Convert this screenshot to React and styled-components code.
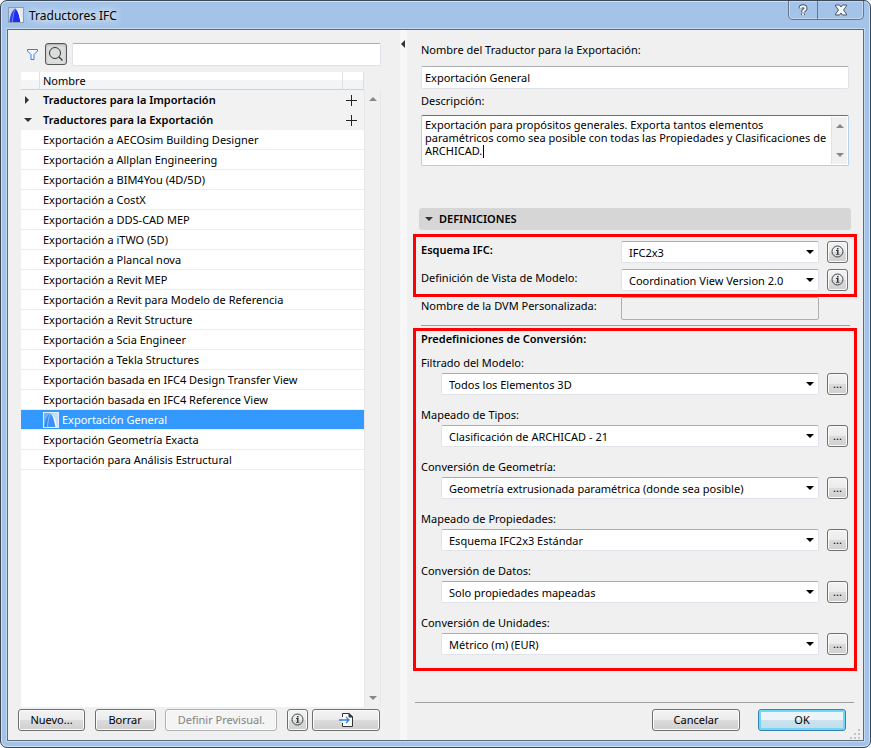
import React, {useState} from 'react';
import styled, {createGlobalStyle} from 'styled-components';

const exporters = [
  'Exportación a AECOsim Building Designer',
  'Exportación a Allplan Engineering',
  'Exportación a BIM4You (4D/5D)',
  'Exportación a CostX',
  'Exportación a DDS-CAD MEP',
  'Exportación a iTWO (5D)',
  'Exportación a Plancal nova',
  'Exportación a Revit MEP',
  'Exportación a Revit para Modelo de Referencia',
  'Exportación a Revit Structure',
  'Exportación a Scia Engineer',
  'Exportación a Tekla Structures',
  'Exportación basada en IFC4 Design Transfer View',
  'Exportación basada en IFC4 Reference View',
  'Exportación General',
  'Exportación Geometría Exacta',
  'Exportación para Análisis Estructural'
];

const conversions = [
  {id: 'filter', label: 'Filtrado del Modelo:', value: 'Todos los Elementos 3D'},
  {id: 'types', label: 'Mapeado de Tipos:', value: 'Clasificación de ARCHICAD - 21'},
  {id: 'geometry', label: 'Conversión de Geometría:', value: 'Geometría extrusionada paramétrica (donde sea posible)'},
  {id: 'properties', label: 'Mapeado de Propiedades:', value: 'Esquema IFC2x3 Estándar'},
  {id: 'data', label: 'Conversión de Datos:', value: 'Solo propiedades mapeadas'},
  {id: 'units', label: 'Conversión de Unidades:', value: 'Métrico (m) (EUR)'}
];

const Triangle = ({dir, color = '#333'}) => {
  const points = {
    down: '0,2 8,2 4,6',
    up: '0,6 8,6 4,2',
    right: '1,0 5,4 1,8',
    left: '5,0 5,8 1,4'
  };
  return (
    <svg width="8" height="8" viewBox="0 0 8 8" aria-hidden="true">
      <polygon points={points[dir]} fill={color} />
    </svg>
  );
};

const AppLogo = ({light}) => (
  <svg width="16" height="16" viewBox="0 0 16 16" aria-hidden="true">
    <rect x="0.5" y="0.5" width="15" height="15" fill={light ? '#6fb0fa' : '#c9d2ea'} stroke={light ? '#e0efff' : '#8f9cb8'} />
    <path d="M7.500 1C10.500 1.500 12.500 7 13.500 15H15V1Z" fill={light ? '#c4dffd' : '#e6e9f2'} />
    <path d="M1.500 15C2 9 4 3 7.500 1.500C5.500 5 4.800 10 4.500 15Z" fill={light ? '#3187f2' : '#2a45e0'} />
    <path d="M4.500 15C4.800 10 5.500 5 7.500 1.500C10 3.500 11.500 9 12.500 15Z" fill={light ? '#3f90f8' : '#1f2df0'} />
    <path d="M4.500 15C4.800 10 5.500 5 7.500 1.500" fill="none" stroke={light ? '#9ccbff' : '#7f93f2'} strokeWidth="0.8" />
    <path d="M7.500 1.500C10 3.500 11.500 9 12.500 15H14C13 8 11 2.500 7.500 1.500Z" fill="#fff" />
  </svg>
);

const InfoIcon = () => (
  <svg width="13" height="13" viewBox="0 0 13 13" aria-hidden="true">
    <circle cx="6.500" cy="6.500" r="5.500" fill="none" stroke="#3a4446" />
    <path d="M6 3h1.500v1.500H6zM5 5h2.500v4.500H6V6H5z" fill="#2c3537" />
    <path d="M5 9h3.500v1H5z" fill="#5c6567" />
  </svg>
);

const PlusIcon = () => (
  <svg width="11" height="11" viewBox="0 0 11 11" aria-hidden="true">
    <path d="M5.500 0V11M0 5.500H11" stroke="#222" />
  </svg>
);

const Combo = ({id, value}) => (
  <ComboWrap>
    <ComboSelect id={id} defaultValue={value}>
      <option>{value}</option>
    </ComboSelect>
    <ComboArrow><Triangle dir="down" color="#000" /></ComboArrow>
  </ComboWrap>
);

const App = () => {
  const [selected, setSelected] = useState('Exportación General');

  return (
    <Frame>
      <GlobalStyle />
      <TitleBar>
        <AppLogo />
        <Title>Traductores IFC</Title>
        <WindowButtons>
          <HelpButton aria-label="Ayuda">
            <svg width="10" height="13" viewBox="0 0 10 13">
              <path d="M2.500 4.500C2.500 1.500 7.500 1.500 7.500 4.500C7.500 6.200 5 6 5 8.200M5 9.500V11" fill="none" stroke="#4b5566" strokeWidth="4" />
              <path d="M2.500 4.500C2.500 1.500 7.500 1.500 7.500 4.500C7.500 6.200 5 6 5 8.200M5 9.500V11" fill="none" stroke="#f2f6fb" strokeWidth="2" />
            </svg>
          </HelpButton>
          <CloseButton aria-label="Cerrar">
            <svg width="12" height="12" viewBox="0 0 12 12">
              <path d="M0.500 1H4.500L6 3L7.500 1H11.500V2L8.500 6L11.500 10V11H7.500L6 9L4.500 11H0.500V10L3.500 6L0.500 2Z" fill="#f2f6fb" stroke="#4b5566" />
            </svg>
          </CloseButton>
        </WindowButtons>
      </TitleBar>

      <Client>
        <ListPane>
          <SearchRow>
            <FilterButton aria-label="Filtro">
              <svg width="11" height="13" viewBox="0 0 11 13">
                <path d="M0.500 1.500H10.500V3L7 6.500V11.500H4V6.500L0.500 3Z" fill="#f4f8fd" stroke="#2f80ed" />
              </svg>
            </FilterButton>
            <SearchButton aria-label="Buscar">
              <svg width="16" height="16" viewBox="0 0 16 16">
                <circle cx="7" cy="7" r="5.500" fill="none" stroke="#2f3638" />
                <path d="M11 11L14.500 14.500" stroke="#2f3638" strokeWidth="1.300" />
              </svg>
            </SearchButton>
            <SearchInput aria-label="Texto de búsqueda" />
          </SearchRow>

          <ListArea>
            <TableArea>
              <Table>
                <thead>
                  <tr>
                    <HeadCell $width={19} aria-label="Expandir" />
                    <HeadCell>Nombre</HeadCell>
                    <HeadCell $width={21} aria-label="Añadir" />
                  </tr>
                </thead>
                <tbody>
                  <GroupRow>
                    <MarkCell><Triangle dir="right" /></MarkCell>
                    <td>Traductores para la Importación</td>
                    <td><PlusButton aria-label="Añadir importación"><PlusIcon /></PlusButton></td>
                  </GroupRow>
                  <GroupRow>
                    <MarkCell><Triangle dir="down" /></MarkCell>
                    <td>Traductores para la Exportación</td>
                    <td><PlusButton aria-label="Añadir exportación"><PlusIcon /></PlusButton></td>
                  </GroupRow>
                  {exporters.map((name) => (
                    <ItemRow key={name} $selected={name === selected} onClick={() => setSelected(name)}>
                      <td />
                      <td colSpan="2">
                        <ItemName>
                          {name === selected && <AppLogo light />}
                          {name}
                        </ItemName>
                      </td>
                    </ItemRow>
                  ))}
                </tbody>
              </Table>
            </TableArea>
            <ListScroll>
              <Triangle dir="up" color="#888" />
              <Triangle dir="down" color="#888" />
            </ListScroll>
          </ListArea>

          <ListFooter>
            <Button $width={67}>Nuevo...</Button>
            <Button $width={61}>Borrar</Button>
            <Button $width={112} disabled>Definir Previsual.</Button>
            <ButtonPair>
              <SquareButton aria-label="Información"><InfoIcon /></SquareButton>
              <Button $width={68} aria-label="Importar">
                <svg width="16" height="16" viewBox="0 0 16 16">
                  <path d="M4.500 5V1.500H11L14.500 5V14.500H4.500V11" fill="#fff" stroke="#2f3638" />
                  <path d="M11 1.500V5H14.500Z" fill="#2f3638" stroke="#2f3638" />
                  <path d="M1 8H11M8 5L11 8L8 11" fill="none" stroke="#2f80ed" strokeWidth="1.300" />
                </svg>
              </Button>
            </ButtonPair>
          </ListFooter>
        </ListPane>

        <Splitter><Triangle dir="left" /></Splitter>

        <DetailPane>
          <General>
            <Label htmlFor="name">Nombre del Traductor para la Exportación:</Label>
            <NameInput id="name" defaultValue="Exportación General" />
            <Label htmlFor="description">Descripción:</Label>
            <DescriptionBox>
              <Description
                id="description"
                defaultValue="Exportación para propósitos generales. Exporta tantos elementos paramétricos como sea posible con todas las Propiedades y Clasificaciones de ARCHICAD."
              />
              <Caret />
              <TextScroll>
                <Triangle dir="up" color="#888" />
                <Triangle dir="down" color="#888" />
              </TextScroll>
            </DescriptionBox>
          </General>

          <SectionBar>
            <Triangle dir="down" />
            DEFINICIONES
          </SectionBar>

          <SchemaBox>
            <FieldRow>
              <FieldLabel htmlFor="schema" $bold>Esquema IFC:</FieldLabel>
              <Combo id="schema" value="IFC2x3" />
              <SquareButton aria-label="Información del esquema"><InfoIcon /></SquareButton>
            </FieldRow>
            <FieldRow>
              <FieldLabel htmlFor="mvd">Definición de Vista de Modelo:</FieldLabel>
              <Combo id="mvd" value="Coordination View Version 2.0" />
              <SquareButton aria-label="Información de la vista"><InfoIcon /></SquareButton>
            </FieldRow>
          </SchemaBox>
          <CustomRow>
            <FieldLabel htmlFor="custom">Nombre de la DVM Personalizada:</FieldLabel>
            <CustomInput id="custom" disabled />
          </CustomRow>
          <Divider />

          <ConversionBox>
            <Heading>Predefiniciones de Conversión:</Heading>
            <ConversionList>
              {conversions.map((item) => (
                <Conversion key={item.id}>
                  <Label htmlFor={item.id}>{item.label}</Label>
                  <ConversionRow>
                    <Combo id={item.id} value={item.value} />
                    <SquareButton aria-label={'Opciones de ' + item.label}>...</SquareButton>
                  </ConversionRow>
                </Conversion>
              ))}
            </ConversionList>
          </ConversionBox>

          <DialogFooter>
            <Button $width={88}>Cancelar</Button>
            <Button $width={88} $primary>OK</Button>
            <Grip width="12" height="12" viewBox="0 0 12 12" aria-hidden="true">
              <path d="M8 2h2v2h-2zM4 6h2v2h-2zM8 6h2v2h-2zM0 10h2v2h-2zM4 10h2v2h-2zM8 10h2v2h-2z" fill="#c4c4c4" />
            </Grip>
          </DialogFooter>
        </DetailPane>
      </Client>
    </Frame>
  );
};

export default App;

// styled components
const GlobalStyle = createGlobalStyle`
  * {
    box-sizing: border-box;
  }

  body {
    margin: 0;
    background: #f4f6f8;
  }

  body, button, input, select, textarea {
    font-family: "Noto Sans", "Open Sans", sans-serif;
    font-size: 11px;
    color: #000;
  }
`;

const Frame = styled.div`
  display: flex;
  flex-direction: column;
  min-height: 100vh;
  padding: 0 6px 6px;
  border: 1px solid #3c4757;
  border-radius: 7px;
  background: #a3c4e8;
  box-shadow: inset 0 0 0 1px #cfe2f5;
`;

const TitleBar = styled.header`
  display: flex;
  align-items: center;
  gap: 5px;
  height: 28px;
  padding-left: 1px;
`;

const Title = styled.h1`
  flex: 1;
  margin: 0;
  font-size: 12px;
  font-weight: normal;
  text-shadow: 0 0 8px #fff, 0 0 8px #fff;
`;

const WindowButtons = styled.div`
  display: flex;
  align-self: flex-start;
  height: 19px;
  border: 1px solid #66768e;
  border-top: 0;
  border-radius: 0 0 5px 5px;
  box-shadow: inset 0 0 0 1px #c3d8ee;
`;

const HelpButton = styled.button`
  display: flex;
  align-items: center;
  justify-content: center;
  width: 28px;
  padding: 0;
  border: 0;
  background: none;
`;

const CloseButton = styled(HelpButton)`
  width: 46px;
  border-left: 1px solid #66768e;
`;

const Client = styled.main`
  flex: 1;
  display: grid;
  grid-template-columns: minmax(0, 49fr) 7px minmax(0, 57fr);
  border: 1px solid #5c6b7d;
  background: #f0f0f0;
  box-shadow: 0 0 0 1px #c3d9f0;
`;

const ListPane = styled.section`
  display: flex;
  flex-direction: column;
  padding: 13px 19px 9px 10px;
`;

const SearchRow = styled.div`
  display: flex;
  align-items: center;
  height: 22px;
  padding-left: 9px;
`;

const FilterButton = styled.button`
  display: flex;
  padding: 0;
  margin-right: 7px;
  border: 0;
  background: none;
`;

const Button = styled.button`
  display: flex;
  align-items: center;
  justify-content: center;
  width: ${(props) => props.$width}px;
  height: 22px;
  padding: 0 0 1px;
  border: 1px solid ${(props) => (props.$primary ? '#3c7fb1' : '#707070')};
  border-radius: 3px;
  background: ${(props) => (props.$primary
    ? 'linear-gradient(#eaf4f9 50%, #cbe2ef 50%, #c2dcea)'
    : 'linear-gradient(#f3f3f3, #ebebeb 50%, #dcdcdc 50%, #cfcfcf)')};
  box-shadow: inset 0 0 0 ${(props) => (props.$primary ? '2px #6fd8f8' : '1px #fafafa')};
  line-height: 16px;

  &:disabled {
    border-color: #adb2b5;
    background: #f4f4f4;
    color: #838383;
  }
`;

const SquareButton = styled(Button)`
  flex: none;
  width: 21px;
`;

const SearchButton = styled(SquareButton)`
  width: 22px;
  margin-right: 5px;
  background: #dcdcdc;
  border-color: #555;
  box-shadow: inset 0 1px 2px #aaa;
`;

const TextInput = styled.input`
  height: 23px;
  padding: 0 3px;
  border: 1px solid #e2e3ea;
  border-top-color: #abadb3;
  border-radius: 2px;
  background: #fff;
`;

const SearchInput = styled(TextInput)`
  flex: 1;
  min-width: 0;
`;

const ListArea = styled.div`
  flex: 1;
  display: flex;
  margin: 7px 0 2px 3px;
`;

const TableArea = styled.div`
  flex: 1;
  background: #fff;
`;

const Table = styled.table`
  width: 100%;
  table-layout: fixed;
  border-collapse: separate;
  border-spacing: 0;

  td {
    height: 20px;
    padding: 0 0 0 3px;
    line-height: 16px;
    white-space: nowrap;
  }
`;

const HeadCell = styled.th`
  width: ${(props) => (props.$width ? props.$width + 'px' : 'auto')};
  height: 18px;
  padding: 0 0 0 3px;
  border-right: 1px solid #dfdfdf;
  border-bottom: 1px solid #d0d0d0;
  background: linear-gradient(#fff 45%, #f3f4f5 45%);
  font-weight: normal;
  line-height: 16px;
  text-align: left;
`;

const GroupRow = styled.tr`
  background: #f2f2f2;
  font-weight: 600;
`;

const ItemRow = styled.tr`
  background: ${(props) => (props.$selected ? '#3399ff' : '#fff')};
  color: ${(props) => (props.$selected ? '#fff' : '#000')};

  td {
    border-bottom: 1px solid #ececec;
  }
`;

const MarkCell = styled.td`
  svg {
    display: block;
  }
`;

const ItemName = styled.div`
  display: flex;
  align-items: center;
  gap: 3px;
`;

const PlusButton = styled.button`
  display: flex;
  padding: 0;
  border: 0;
  background: none;
`;

const ListScroll = styled.div`
  display: flex;
  flex-direction: column;
  justify-content: space-between;
  align-items: center;
  width: 17px;
  margin-top: 18px;
  padding: 5px 0;
  border: 1px solid #e6e6e6;
  border-width: 0 1px;
`;

const ListFooter = styled.footer`
  display: flex;
  justify-content: space-between;
  padding-right: 1px;
`;

const ButtonPair = styled.div`
  display: flex;
  gap: 4px;
`;

const Splitter = styled.div`
  padding-top: 6px;
  background: #f7f7f7;
`;

const DetailPane = styled.section`
  display: flex;
  flex-direction: column;
  padding: 12px 6px 9px;
`;

const General = styled.div`
  display: flex;
  flex-direction: column;
  margin: 0 8px 42px;
`;

const Label = styled.label`
  line-height: 16px;
`;

const NameInput = styled(TextInput)`
  margin: 8px 0 4px;
`;

const DescriptionBox = styled.div`
  position: relative;
  display: flex;
  height: 51px;
  margin-top: 6px;
  border: 1px solid #b5cfe7;
  border-top-color: #3d7bad;
  border-radius: 2px;
  background: #fff;
`;

const Description = styled.textarea`
  flex: 1;
  min-width: 0;
  padding: 2px 0 0 3px;
  border: 0;
  outline: 0;
  resize: none;
  overflow: hidden;
  background: none;
  line-height: 13px;
`;

const Caret = styled.span`
  position: absolute;
  left: 61px;
  top: 29px;
  width: 1px;
  height: 13px;
  background: #000;
`;

const TextScroll = styled.div`
  display: flex;
  flex-direction: column;
  justify-content: space-between;
  align-items: center;
  width: 16px;
  margin: 1px 1px 1px 0;
  padding: 5px 0;
  border-left: 1px solid #e2e2e2;
  background: #f0f0f0;
`;

const SectionBar = styled.h2`
  display: flex;
  align-items: center;
  gap: 6px;
  height: 22px;
  margin: 0 6px 4px;
  padding: 0 0 1px 6px;
  border-radius: 3px;
  background: #d6d6d6;
  font-size: 11px;
  font-weight: 600;
  line-height: 16px;
`;

const SchemaBox = styled.div`
  display: flex;
  flex-direction: column;
  gap: 6px;
  padding: 4px 6px 3px 5px;
  border: 3px solid #f00;
`;

const FieldRow = styled.div`
  display: flex;

  > button {
    margin-left: 8px;
  }
`;

const FieldLabel = styled.label`
  flex: none;
  width: 200px;
  padding-top: 1px;
  font-weight: ${(props) => (props.$bold ? '600' : 'normal')};
  line-height: 16px;
`;

const ComboWrap = styled.div`
  flex: 1;
  display: grid;
  min-width: 0;
`;

const ComboSelect = styled.select`
  grid-area: 1 / 1;
  width: 100%;
  height: 22px;
  padding: 0 20px 0 7px;
  appearance: none;
  border: 1px solid #e2e3ea;
  border-top-color: #abadb3;
  border-radius: 2px;
  background: #fff;
`;

const ComboArrow = styled.span`
  grid-area: 1 / 1;
  display: flex;
  align-self: center;
  justify-self: end;
  margin-right: 5px;
  pointer-events: none;
`;

const CustomRow = styled.div`
  display: flex;
  padding: 0 38px 0 8px;
`;

const CustomInput = styled(TextInput)`
  flex: 1;
  min-width: 0;
  border-color: #afafaf;
  background: #f0f0f0;
`;

const Divider = styled.hr`
  width: calc(100% - 15px);
  height: 1px;
  margin: 5px 7px 2px 8px;
  border: 0;
  background: #a0a0a0;
`;

const ConversionBox = styled.div`
  padding: 0 6px 13px 5px;
  border: 3px solid #f00;
`;

const Heading = styled.h3`
  margin: 0 0 8px;
  font-size: 11px;
  font-weight: 600;
  line-height: 16px;
`;

const ConversionList = styled.div`
  display: flex;
  flex-direction: column;
  gap: 12px;
`;

const Conversion = styled.div`
  display: flex;
  flex-direction: column;
  gap: 2px;
`;

const ConversionRow = styled.div`
  display: flex;
  gap: 8px;
  padding-left: 20px;
`;

const DialogFooter = styled.footer`
  position: relative;
  display: flex;
  justify-content: flex-end;
  gap: 18px;
  margin: auto 3px 0 2px;
  padding: 6px 8px 0 0;
  border-top: 1px solid #a0a0a0;
`;

const Grip = styled.svg`
  position: absolute;
  right: -8px;
  bottom: -8px;
`;
